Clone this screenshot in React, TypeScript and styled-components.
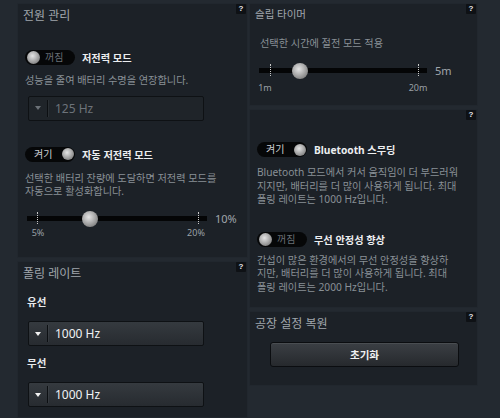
import React from "react";
import styled, { createGlobalStyle } from "styled-components";

const Global = createGlobalStyle`
  html, body { margin: 0; padding: 0; background: #232930; }
  body { font-family: "Noto Sans", "Noto Sans CJK KR", sans-serif; }
`;

const Page = styled.div`
  width: 500px;
  height: 418px;
  overflow: hidden;
  box-sizing: border-box;
  display: flex;
  gap: 1px;
  padding: 3px 22px 0 17px;
  background: #232930;
`;

const Column = styled.div<{ $w: number }>`
  width: ${(p) => p.$w}px;
  flex-shrink: 0;
  display: flex;
  flex-direction: column;
  gap: 3px;
`;

const Panel = styled.section<{ $h?: number }>`
  position: relative;
  box-sizing: border-box;
  background: #1c2127;
  box-shadow: inset 0 0 0 1px #21272e;
  padding: 4px 8px 0 8px;
  ${(p) => (p.$h ? `height: ${p.$h}px; flex-shrink: 0;` : "flex: 1;")}
`;

const Help = styled.span`
  position: absolute;
  top: 1px;
  right: 2px;
  width: 10px;
  height: 10px;
  background: #0e1115;
  border-radius: 1px;
  color: #e6e8ea;
  font: bold 8px/10px "Liberation Sans", sans-serif;
  text-align: center;
`;

const Title = styled.h2<{ $size: number; $lh: number }>`
  margin: 0 0 0 -2px;
  font-weight: normal;
  font-size: ${(p) => p.$size}px;
  line-height: ${(p) => p.$lh}px;
  color: #a0a6ac;
`;

const Desc = styled.p<{ $mt: number; $ml?: number }>`
  margin: ${(p) => p.$mt}px 0 0 ${(p) => p.$ml ?? 0}px;
  font-size: 10.2px;
  line-height: 13.5px;
  color: #899096;
  white-space: nowrap;
`;

const ToggleRow = styled.div<{ $mt: number }>`
  display: flex;
  align-items: center;
  gap: 7px;
  margin-top: ${(p) => p.$mt}px;
`;

const Pill = styled.div`
  width: 50px;
  height: 15px;
  box-sizing: border-box;
  border-radius: 8px;
  background: #060708;
  display: flex;
  align-items: center;
  padding: 0 1px 0 2px;
`;

const Knob = styled.span<{ $size: number }>`
  display: block;
  width: ${(p) => p.$size}px;
  height: ${(p) => p.$size}px;
  border-radius: 50%;
  flex-shrink: 0;
  background: radial-gradient(circle at 42% 38%, #e4e4e4 0%, #b8b8b8 35%, #8a8a8a 70%, #575757 100%);
`;

const PillText = styled.span<{ $on: boolean }>`
  font-size: 10px;
  line-height: 15px;
  color: ${(p) => (p.$on ? "#c9cdd1" : "#6a7076")};
  margin-left: ${(p) => (p.$on ? "7px" : "5px")};
  margin-right: ${(p) => (p.$on ? "auto" : "0")};
`;

const ToggleLabel = styled.span`
  font-size: 10.2px;
  font-weight: bold;
  color: #eceef0;
`;

const Toggle = ({ on, label }: { on: boolean; label: string }) => (
  <>
    <Pill>
      {on ? (
        <>
          <PillText $on>켜기</PillText>
          <Knob $size={12} />
        </>
      ) : (
        <>
          <Knob $size={13} />
          <PillText $on={false}>꺼짐</PillText>
        </>
      )}
    </Pill>
    <ToggleLabel>{label}</ToggleLabel>
  </>
);

const Select = styled.div<{ $disabled?: boolean; $mt: number }>`
  width: 176px;
  height: 25px;
  box-sizing: border-box;
  margin: ${(p) => p.$mt}px 0 0 3px;
  display: flex;
  align-items: center;
  border: 1px solid #0e1114;
  border-radius: 2px;
  background: ${(p) =>
    p.$disabled ? "#1f2429" : "linear-gradient(#353a3f, #272b30)"};
`;

const ArrowBox = styled.span`
  width: 18px;
  display: flex;
  justify-content: center;
`;

const Arrow = styled.span<{ $disabled?: boolean }>`
  width: 0;
  height: 0;
  border-left: 3px solid transparent;
  border-right: 3px solid transparent;
  border-top: 4px solid ${(p) => (p.$disabled ? "#6b7177" : "#f2f2f2")};
`;

const Sep = styled.span`
  width: 1px;
  height: 17px;
  background: #0c0f12;
  box-shadow: 1px 0 0 rgba(255, 255, 255, 0.05);
`;

const SelectValue = styled.span<{ $disabled?: boolean }>`
  margin-left: 7px;
  font-size: 12px;
  color: ${(p) => (p.$disabled ? "#6d737a" : "#f0f2f4")};
`;

const Dropdown = ({ value, disabled, mt }: { value: string; disabled?: boolean; mt: number }) => (
  <Select $disabled={disabled} $mt={mt}>
    <ArrowBox>
      <Arrow $disabled={disabled} />
    </ArrowBox>
    <Sep />
    <SelectValue $disabled={disabled}>{value}</SelectValue>
  </Select>
);

const FieldLabel = styled.div<{ $mt: number }>`
  margin: ${(p) => p.$mt}px 0 0 2px;
  font-size: 10.5px;
  line-height: 14px;
  font-weight: bold;
  color: #e8eaec;
`;

const SliderBlock = styled.div<{ $mt: number }>`
  margin: ${(p) => p.$mt}px 0 0 2px;
`;

const SliderRow = styled.div`
  display: flex;
  align-items: center;
  gap: 8px;
  height: 16px;
`;

const Track = styled.div<{ $w: number }>`
  position: relative;
  width: ${(p) => p.$w}px;
  height: 5px;
  background: #040506;
`;

const Tick = styled.span`
  position: absolute;
  top: -4px;
  height: 12px;
  border-left: 1px dotted #c8c8c8;
`;

const Thumb = styled(Knob)`
  position: absolute;
  top: 50%;
  margin: -8px 0 0 -8px;
`;

const SliderValue = styled.span`
  font-size: 11px;
  color: #a0a6ac;
`;

const Scale = styled.div<{ $mt: number; $w: number }>`
  position: relative;
  width: ${(p) => p.$w}px;
  height: 12px;
  margin-top: ${(p) => p.$mt}px;
`;

const ScaleLabel = styled.span`
  position: absolute;
  top: 0;
  transform: translateX(-50%);
  font-size: 9px;
  line-height: 12px;
  color: #9aa0a6;
`;

type SliderProps = {
  width: number;
  ticks: number[];
  thumb: number;
  value: string;
  labels: { text: string; at: number }[];
  mt: number;
  scaleGap: number;
};

const Slider = ({ width, ticks, thumb, value, labels, mt, scaleGap }: SliderProps) => (
  <SliderBlock $mt={mt}>
    <SliderRow>
      <Track $w={width}>
        {ticks.map((t) => (
          <Tick key={t} style={{ left: t }} />
        ))}
        <Thumb $size={16} style={{ left: thumb }} />
      </Track>
      <SliderValue>{value}</SliderValue>
    </SliderRow>
    <Scale $mt={scaleGap} $w={width}>
      {labels.map((l) => (
        <ScaleLabel key={l.text} style={{ left: l.at }}>
          {l.text}
        </ScaleLabel>
      ))}
    </Scale>
  </SliderBlock>
);

const ResetButton = styled.button`
  display: block;
  width: 189px;
  height: 25px;
  margin: 9px 0 0 13px;
  border: 1px solid #0b0d10;
  border-radius: 3px;
  background: linear-gradient(#3b3f44, #26292d);
  box-shadow: inset 0 1px 0 rgba(255, 255, 255, 0.08);
  color: #eef0f2;
  font-family: "Noto Sans CJK KR", sans-serif;
  font-size: 10.5px;
  font-weight: bold;
  cursor: pointer;
`;

export default function App() {
  return (
    <>
      <Global />
      <Page>
        <Column $w={231}>
          <Panel $h={255}>
            <Help>?</Help>
            <Title $size={12} $lh={18}>전원 관리</Title>
            <ToggleRow $mt={25}>
              <Toggle on={false} label="저전력 모드" />
            </ToggleRow>
            <Desc $mt={9}>성능을 줄여 배터리 수명을 연장합니다.</Desc>
            <Dropdown value="125 Hz" disabled mt={8} />
            <ToggleRow $mt={26}>
              <Toggle on label="자동 저전력 모드" />
            </ToggleRow>
            <Desc $mt={10}>
              선택한 배터리 잔량에 도달하면 저전력 모드를
              <br />
              자동으로 활성화합니다.
            </Desc>
            <Slider
              mt={12}
              width={180}
              ticks={[10, 171]}
              thumb={63}
              value="10%"
              scaleGap={0}
              labels={[
                { text: "5%", at: 11 },
                { text: "20%", at: 169 },
              ]}
            />
          </Panel>
          <Panel>
            <Help>?</Help>
            <Title $size={12} $lh={18}>폴링 레이트</Title>
            <FieldLabel $mt={12}>유선</FieldLabel>
            <Dropdown value="1000 Hz" mt={12} />
            <FieldLabel $mt={10}>무선</FieldLabel>
            <Dropdown value="1000 Hz" mt={12} />
          </Panel>
        </Column>
        <Column $w={229}>
          <Panel $h={103}>
            <Help>?</Help>
            <Title $size={10.5} $lh={14}>슬립 타이머</Title>
            <Desc $mt={16} $ml={3}>선택한 시간에 절전 모드 적용</Desc>
            <Slider
              mt={12}
              width={168}
              ticks={[11, 159]}
              thumb={41}
              value="5m"
              scaleGap={3}
              labels={[
                { text: "1m", at: 6 },
                { text: "20m", at: 159 },
              ]}
            />
          </Panel>
          <Panel $h={199}>
            <Help>?</Help>
            <ToggleRow $mt={29}>
              <Toggle on label="Bluetooth 스무딩" />
            </ToggleRow>
            <Desc $mt={9}>
              Bluetooth 모드에서 커서 움직임이 더 부드러워
              <br />
              지지만, 배터리를 더 많이 사용하게 됩니다. 최대
              <br />
              폴링 레이트는 1000 Hz입니다.
            </Desc>
            <ToggleRow $mt={25}>
              <Toggle on={false} label="무선 안정성 향상" />
            </ToggleRow>
            <Desc $mt={7}>
              간섭이 많은 환경에서의 무선 안정성을 향상하
              <br />
              지만, 배터리를 더 많이 사용하게 됩니다. 최대
              <br />
              폴링 레이트는 2000 Hz입니다.
            </Desc>
          </Panel>
          <Panel $h={75}>
            <Help>?</Help>
            <Title $size={12} $lh={18}>공장 설정 복원</Title>
            <ResetButton>초기화</ResetButton>
          </Panel>
        </Column>
      </Page>
    </>
  );
}
